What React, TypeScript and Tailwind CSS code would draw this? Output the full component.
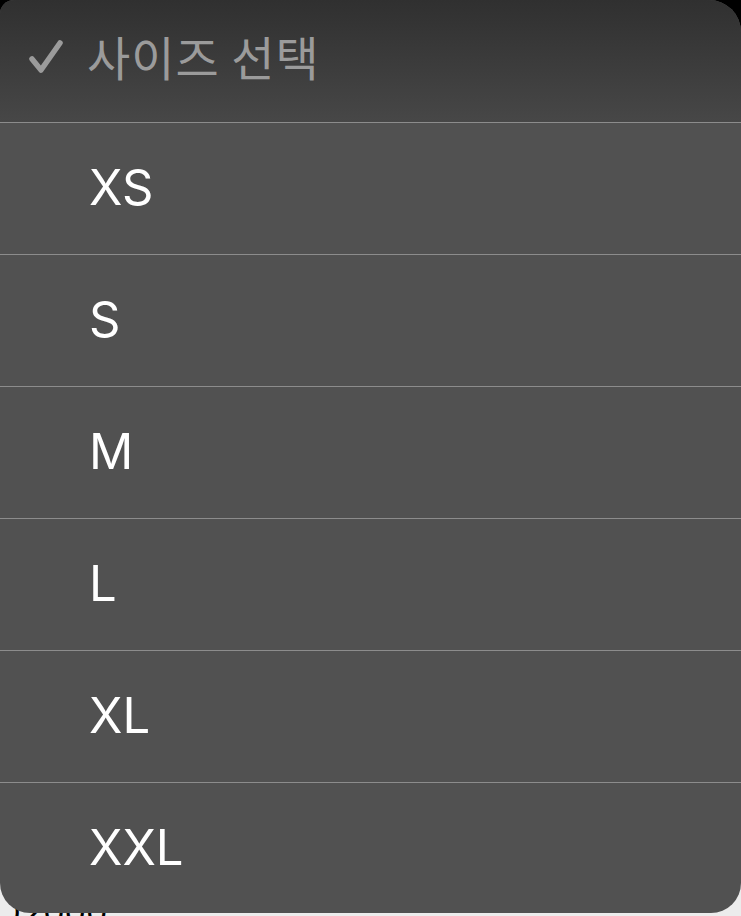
import React from "react";

const sizes = ["XS", "S", "M", "L", "XL", "XXL"];

function Check() {
  return (
    <svg width="38" height="38" viewBox="0 0 38 38" fill="none">
      <path
        d="M5 22 L14 33 L33 6"
        stroke="#9b9b9b"
        strokeWidth="5.5"
        strokeLinecap="round"
        strokeLinejoin="round"
      />
    </svg>
  );
}

export default function App() {
  return (
    <div className="relative w-[741px] h-[916px] overflow-hidden bg-[#ececec] font-['Inter','Noto_Sans_CJK_KR',sans-serif]">
      {/* page behind the menu */}
      <div className="h-[200px] bg-black" />
      <div className="h-[692px]" />
      <div className="pl-[10px] text-[34px] leading-[40px] text-black">)2000</div>

      {/* size menu */}
      <div className="absolute left-0 top-0 w-[741px] h-[913px] overflow-hidden rounded-tl-[14px] rounded-tr-[32px] rounded-b-[30px] bg-[#515151]">
        <div className="h-[122px] flex items-center pl-[27px] pb-[10px] bg-gradient-to-b from-[#303030] to-[#474747]">
          <Check />
          <span className="ml-[22px] text-[47px] text-[#9b9b9b] font-['Noto_Sans_CJK_KR',sans-serif] tracking-[1px]">
            사이즈 선택
          </span>
        </div>
        {sizes.map((s) => (
          <div key={s}>
            <div className="h-px bg-[#8c8c8c]" />
            <div className="h-[131px] flex items-center pl-[89px] pb-[2px] text-[49px] text-white">
              {s}
            </div>
          </div>
        ))}
      </div>
    </div>
  );
}
